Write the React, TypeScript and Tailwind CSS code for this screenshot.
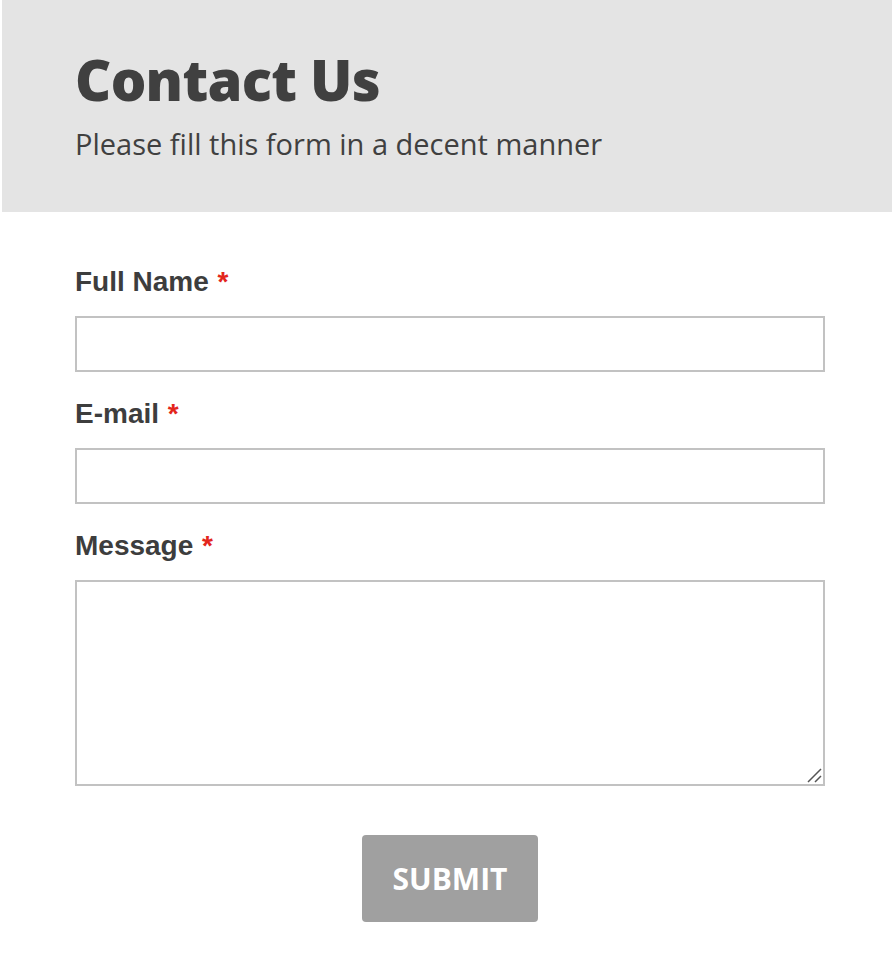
import { useState } from "react";

type Field = { id: string; label: string; type: "text" | "email" | "textarea" };

const fields: Field[] = [
  { id: "name", label: "Full Name", type: "text" },
  { id: "email", label: "E-mail", type: "email" },
  { id: "message", label: "Message", type: "textarea" },
];

const inputCls =
  "block w-full border-2 border-[#c2c2c2] bg-white px-3 text-[20px] text-[#404040] outline-none focus:border-[#999]";

export default function App() {
  const [values, setValues] = useState<Record<string, string>>({ name: "", email: "", message: "" });

  return (
    <div className="min-h-screen bg-white font-['Liberation_Sans',Arial,sans-serif] text-[#3f3f3f]">
      <header className="ml-[2px] h-[212px] bg-[#e4e4e4] pl-[73px] pt-[51px] font-['Open_Sans',sans-serif]">
        <h1 className="text-[56px] font-extrabold leading-[56px] tracking-[-0.7px] text-[#404040]">Contact Us</h1>
        <p className="mt-[22px] text-[29px] leading-[29px] text-[#404040]">Please fill this form in a decent manner</p>
      </header>

      <form className="w-[750px] ml-[75px] pt-[56px]" onSubmit={(e) => e.preventDefault()}>
        {fields.map((f, i) => (
          <div key={f.id} className={i === 0 ? "" : "mt-[28px]"}>
            <label htmlFor={f.id} className="block text-[28px] font-bold leading-[28px] text-[#3d3d3d]">
              {f.label} <span className="ml-[1px] text-[#e3261c]">*</span>
            </label>
            {f.type === "textarea" ? (
              <div className="relative mt-[20px]">
                <textarea
                  id={f.id}
                  value={values[f.id]}
                  onChange={(e) => setValues({ ...values, [f.id]: e.target.value })}
                  className={`${inputCls} h-[206px] resize-none py-2`}
                />
                {/* resize grip */}
                <svg className="pointer-events-none absolute bottom-[3px] right-[3px]" width="16" height="16" viewBox="0 0 16 16">
                  <path d="M2 15 L15 2 M9 15 L15 9" stroke="#555" strokeWidth="1.5" fill="none" />
                </svg>
              </div>
            ) : (
              <input
                id={f.id}
                type={f.type}
                value={values[f.id]}
                onChange={(e) => setValues({ ...values, [f.id]: e.target.value })}
                className={`${inputCls} mt-[20px] h-[56px]`}
              />
            )}
          </div>
        ))}

        <div className="mt-[49px] flex justify-center">
          <button
            type="submit"
            className="h-[87px] w-[176px] rounded-[4px] bg-[#a0a0a0] font-['Open_Sans',sans-serif] text-[30px] font-bold text-white"
          >
            SUBMIT
          </button>
        </div>
      </form>
    </div>
  );
}
